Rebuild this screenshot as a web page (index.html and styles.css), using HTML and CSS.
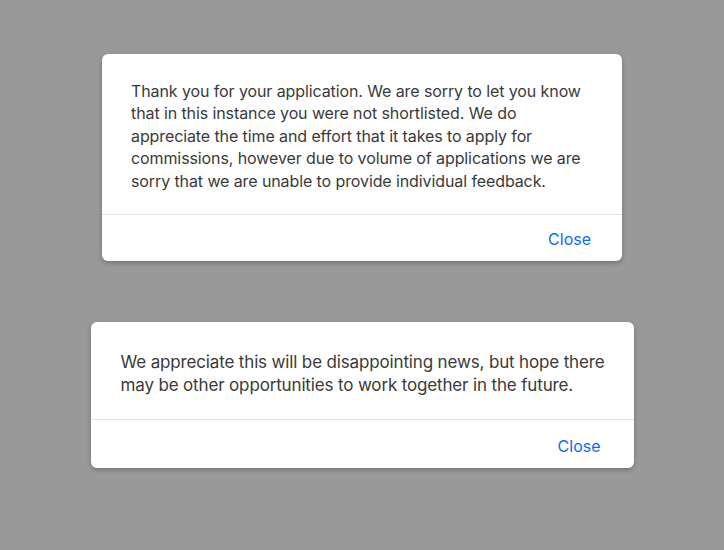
FILE: index.html
```html
<!DOCTYPE html>
<html>
<head>
<meta charset="utf-8">
<link rel="stylesheet" href="styles.css">
</head>
<body>
<div class="stage">
  <div class="dialog dialog-one">
    <div class="dialog-body">
      <p>Thank you for your application. We are sorry to let you know that in this instance you were not shortlisted. We do appreciate the time and effort that it takes to apply for commissions, however due to volume of applications we are sorry that we are unable to provide individual feedback.</p>
    </div>
    <div class="dialog-footer"><button class="close">Close</button></div>
  </div>
  <div class="dialog dialog-two">
    <div class="dialog-body">
      <p>We appreciate this will be disappointing news, but hope there may be other opportunities to work together in the future.</p>
    </div>
    <div class="dialog-footer"><button class="close">Close</button></div>
  </div>
</div>
</body>
</html>
```
FILE: styles.css
```css
html, body {
  margin: 0;
  padding: 0;
  background: #999999;
  height: 100%;
}
.stage {
  display: flex;
  flex-direction: column;
  align-items: center;
  padding-top: 54px;
  gap: 61px;
  font-family: "Inter", "Liberation Sans", sans-serif;
}
.dialog {
  background: #ffffff;
  border-radius: 6px;
  box-shadow: 0 2px 5px rgba(0, 0, 0, 0.25);
  box-sizing: border-box;
}
.dialog-one { width: 520px; }
.dialog-two { width: 543px; }
.dialog-body {
  padding: 26px 29px 22px 29px;
  border-bottom: 1px solid #e3e3e3;
}
.dialog-two .dialog-body { padding: 29px 20px 22px 30px; }
.dialog-body p {
  margin: 0;
  font-size: 16px;
  line-height: 22.4px;
  color: #3a3a3a;
  letter-spacing: -0.1px;
}
.dialog-two .dialog-body p {
  font-size: 17px;
  line-height: 23px;
  letter-spacing: -0.15px;
}
.dialog-footer {
  display: flex;
  justify-content: flex-end;
  align-items: center;
  box-sizing: border-box;
  height: 46px;
  padding: 2px 31px 0 0;
}
.dialog-two .dialog-footer { height: 48px; padding: 4px 33px 0 0; }
.close {
  background: none;
  border: none;
  padding: 0;
  font-family: inherit;
  font-size: 16px;
  color: #0a6cf5;
  cursor: pointer;
}
```
